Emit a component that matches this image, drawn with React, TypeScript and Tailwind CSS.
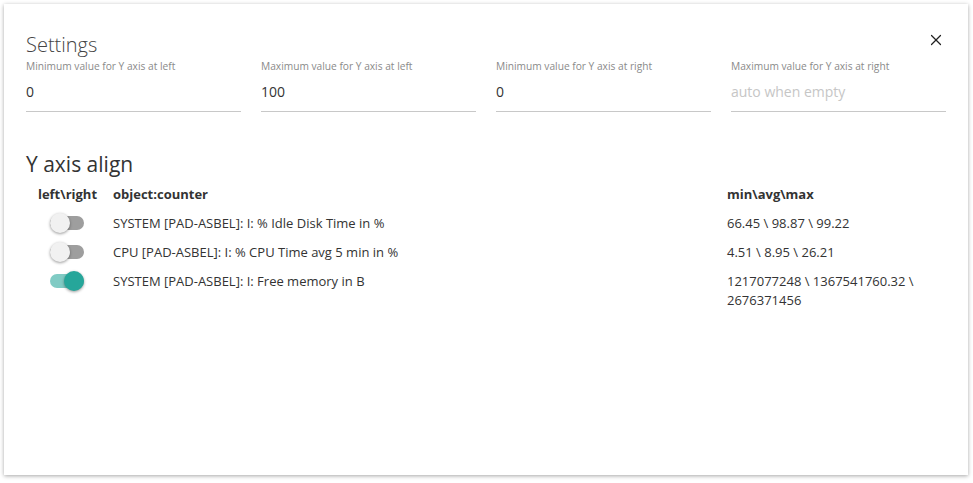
import { X } from 'lucide-react';

interface Counter {
  name: string;
  stats: string;
  right: boolean;
}

const fields = [
  { label: 'Minimum value for Y axis at left', value: '0' },
  { label: 'Maximum value for Y axis at left', value: '100' },
  { label: 'Minimum value for Y axis at right', value: '0' },
  { label: 'Maximum value for Y axis at right', value: '', placeholder: 'auto when empty' },
];

const counters: Counter[] = [
  { name: 'SYSTEM [PAD-ASBEL]: I: % Idle Disk Time in %', stats: '66.45 \\ 98.87 \\ 99.22', right: false },
  { name: 'CPU [PAD-ASBEL]: I: % CPU Time avg 5 min in %', stats: '4.51 \\ 8.95 \\ 26.21', right: false },
  { name: 'SYSTEM [PAD-ASBEL]: I: Free memory in B', stats: '1217077248 \\ 1367541760.32 \\ 2676371456', right: true },
];

function Toggle({ on }: { on: boolean }) {
  return (
    <div className="relative w-[34px] h-[20px]">
      <div className={`absolute left-0 top-[3px] w-[34px] h-[14px] rounded-full ${on ? 'bg-[#80cbc4]' : 'bg-[#9e9e9e]'}`} />
      <div
        className={`absolute top-0 w-[20px] h-[20px] rounded-full shadow-[0_1px_3px_rgba(0,0,0,0.4)] ${
          on ? 'left-[14px] bg-[#26a69a]' : 'left-0 bg-[#f1f1f1]'
        }`}
      />
    </div>
  );
}

export default function App() {
  return (
    <div className="min-h-screen bg-white p-1 font-['Open_Sans','Liberation_Sans',sans-serif] text-[#333]">
      <div className="relative w-[964px] h-[471px] bg-white shadow-[0_1px_4px_rgba(0,0,0,0.35)] px-[22px] pt-[28px]">
        <button className="absolute right-[23px] top-[27px] text-[#222]">
          <X size={18} strokeWidth={1.6} />
        </button>

        <h2 className="text-[20px] font-light leading-[26px] text-[#444]">Settings</h2>

        <div className="grid grid-cols-4 gap-x-5 w-[920px] mt-[1px]">
          {fields.map((f) => (
            <div key={f.label} className="flex flex-col">
              <label className="text-[10.2px] leading-[14px] text-[#8a8a8a]">{f.label}</label>
              <div className="mt-[10px] pb-[7px] border-b-[1.5px] border-[#c8c8c8] text-[14px] leading-[18px] h-[29px]">
                {f.value ? <span>{f.value}</span> : <span className="text-[#c6c6c6]">{f.placeholder}</span>}
              </div>
            </div>
          ))}
        </div>

        <h3 className="mt-[38px] text-[21px] leading-[28px] text-[#333]">Y axis align</h3>

        <div className="grid grid-cols-[87px_614px_219px] mt-[7px] text-[13px] leading-[19px]">
          <div className="text-center font-bold pr-[4px]">left\right</div>
          <div className="font-bold">object:counter</div>
          <div className="font-bold">min\avg\max</div>

          {counters.map((c) => (
            <div key={c.name} className="contents">
              <div className="flex justify-center pt-[9px] pr-[6px]">
                <Toggle on={c.right} />
              </div>
              <div className="pt-[10px]">{c.name}</div>
              <div className="pt-[10px] pr-[10px]">{c.stats}</div>
            </div>
          ))}
        </div>
      </div>
    </div>
  );
}
